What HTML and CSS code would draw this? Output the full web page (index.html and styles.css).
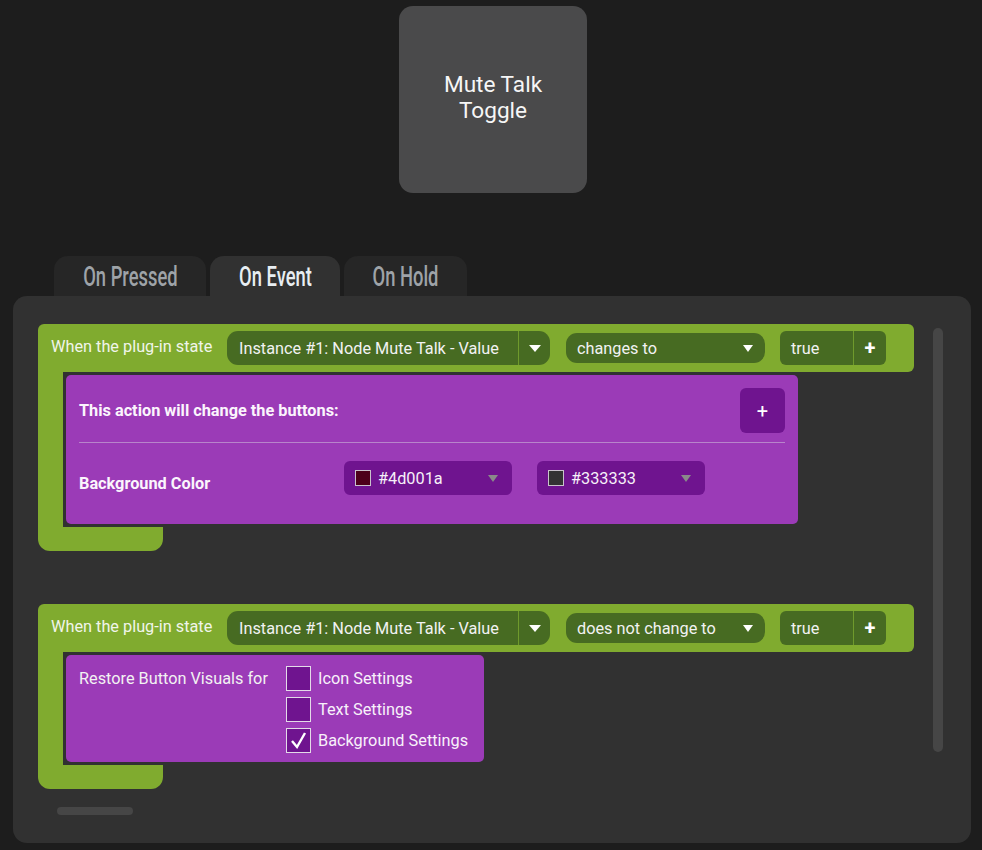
FILE: index.html
```html
<!DOCTYPE html>
<html lang="en">
<head>
    <meta charset="UTF-8">
    <meta name="viewport" content="width=device-width, initial-scale=1.0">
    <title>Mute Talk Toggle</title>
    <link rel="stylesheet" href="styles.css">
</head>
<body>
    <div class="preview">
        <div class="key">Mute Talk<br>Toggle</div>
    </div>

    <div class="tabs">
        <div class="tab tab-pressed"><span>On Pressed</span></div>
        <div class="tab tab-event active"><span>On Event</span></div>
        <div class="tab tab-hold"><span>On Hold</span></div>
    </div>

    <div class="panel">
        <div class="rules">
            <!-- rule 1 -->
            <div class="rule">
                <div class="rule-head">
                    <span class="rule-label">When the plug-in state</span>
                    <div class="select select-state">
                        <span class="select-text">Instance #1: Node Mute Talk - Value</span>
                        <span class="select-btn"><span class="tri"></span></span>
                    </div>
                    <div class="select select-cond">
                        <span class="select-text">changes to</span>
                        <span class="tri"></span>
                    </div>
                    <div class="value">
                        <span class="value-text">true</span>
                        <span class="value-add">+</span>
                    </div>
                </div>
                <div class="rule-body">
                    <div class="action action-change">
                        <div class="action-header">
                            <span class="action-title">This action will change the buttons:</span>
                            <button class="add-btn">+</button>
                        </div>
                        <div class="action-row">
                            <span class="row-label">Background Color</span>
                            <div class="pickers">
                                <div class="picker">
                                    <span class="swatch swatch-red"></span>
                                    <span class="picker-text">#4d001a</span>
                                    <span class="picker-arrow"></span>
                                </div>
                                <div class="picker">
                                    <span class="swatch swatch-grey"></span>
                                    <span class="picker-text">#333333</span>
                                    <span class="picker-arrow"></span>
                                </div>
                            </div>
                        </div>
                    </div>
                </div>
                <div class="rule-foot"></div>
            </div>

            <!-- rule 2 -->
            <div class="rule">
                <div class="rule-head">
                    <span class="rule-label">When the plug-in state</span>
                    <div class="select select-state">
                        <span class="select-text">Instance #1: Node Mute Talk - Value</span>
                        <span class="select-btn"><span class="tri"></span></span>
                    </div>
                    <div class="select select-cond">
                        <span class="select-text">does not change to</span>
                        <span class="tri"></span>
                    </div>
                    <div class="value">
                        <span class="value-text">true</span>
                        <span class="value-add">+</span>
                    </div>
                </div>
                <div class="rule-body">
                    <div class="action action-restore">
                        <span class="restore-label">Restore Button Visuals for</span>
                        <div class="checks">
                            <label class="check"><span class="box"></span>Icon Settings</label>
                            <label class="check"><span class="box"></span>Text Settings</label>
                            <label class="check"><span class="box checked"><svg width="19" height="19" viewBox="0 0 19 19"><path d="M3 10 L8 16 L16 2" fill="none" stroke="#fff" stroke-width="2.4" stroke-linejoin="miter"/></svg></span>Background Settings</label>
                        </div>
                    </div>
                </div>
                <div class="rule-foot"></div>
            </div>
        </div>
        <div class="vscroll"></div>
        <div class="hscroll"></div>
    </div>
</body>
</html>
```

FILE: styles.css
```css
body {
    margin: 0;
    padding: 0;
    background-color: #1d1d1d;
    font-family: Roboto, "Liberation Sans", sans-serif;
    font-size: 16.3px;
    color: #f2f2f2;
}

.preview {
    display: flex;
    justify-content: center;
    padding-top: 6px;
}

.key {
    width: 188px;
    height: 187px;
    margin-left: 4px;
    padding-bottom: 4px;
    box-sizing: border-box;
    background-color: #4a4a4b;
    border-radius: 14px;
    display: flex;
    align-items: center;
    justify-content: center;
    text-align: center;
    font-size: 22.6px;
    line-height: 26px;
    color: #f6f6f6;
}

.tabs {
    display: flex;
    gap: 4px;
    margin: 63px 0 0 54px;
}

.tab {
    height: 40px;
    display: flex;
    align-items: center;
    justify-content: center;
    background-color: #262626;
    border-radius: 14px 14px 0 0;
    font-family: Roboto, sans-serif;
    font-size: 27px;
    font-weight: 500;
    color: #9ea3a8;
}

.tab span {
    display: inline-block;
    transform: scaleX(0.68);
    white-space: nowrap;
    margin-top: 2px;
}

.tab-pressed { width: 152px; }
.tab-event { width: 130px; }
.tab-hold { width: 123px; }

.tab.active {
    background-color: #313131;
    color: #e8eef2;
}

.panel {
    position: relative;
    margin: 0 11px 0 13px;
    height: 547px;
    background-color: #313131;
    border-radius: 14px;
    box-sizing: border-box;
}

.rules {
    padding: 28px 0 0 25px;
    display: flex;
    flex-direction: column;
    gap: 53px;
}

.rule-head {
    width: 876px;
    height: 48px;
    box-sizing: border-box;
    padding-left: 13px;
    display: flex;
    align-items: center;
    background-color: #80ab2f;
    border-radius: 6px 6px 6px 0;
}

.rule-label {
    margin-top: -3px;
    width: 176px;
    white-space: nowrap;
    color: #f1f5ea;
}

.select {
    display: flex;
    align-items: center;
    background-color: #476b22;
    color: #f2f2f2;
    border-radius: 11px;
    box-sizing: border-box;
}

.select-state {
    width: 323px;
    height: 34px;
}

.select-state .select-text {
    flex: 1;
    padding-left: 12px;
    white-space: nowrap;
}

.select-btn {
    width: 31px;
    height: 100%;
    border-left: 1px solid #6f9a2c;
    display: flex;
    align-items: center;
    justify-content: center;
}

.tri {
    width: 0;
    height: 0;
    border-left: 6px solid transparent;
    border-right: 6px solid transparent;
    border-top: 7px solid #ffffff;
}

.select-cond {
    width: 199px;
    height: 30px;
    margin-left: 16px;
    padding: 0 12px 0 11px;
    justify-content: space-between;
}

.select-cond .tri {
    border-left-width: 5px;
    border-right-width: 5px;
    border-top-width: 7px;
}

.value {
    display: flex;
    align-items: center;
    width: 106px;
    height: 34px;
    margin-left: 15px;
    background-color: #476b22;
    border-radius: 6px;
}

.value-text {
    flex: 1;
    padding-left: 11px;
}

.value-add {
    width: 32px;
    height: 100%;
    border-left: 1px solid #6f9a2c;
    display: flex;
    align-items: center;
    justify-content: center;
    font-size: 20px;
    font-weight: bold;
    color: #fff;
}

.rule-body {
    display: flex;
    align-items: flex-start;
    border-left: 25px solid #80ab2f;
    padding: 3px 0 3px 3px;
}

.rule-foot {
    width: 125px;
    height: 24px;
    background-color: #80ab2f;
    border-radius: 0 0 12px 12px;
}

.action {
    background-color: #9b3bb7;
    border-radius: 5px;
    box-sizing: border-box;
}

.action-change {
    width: 732px;
    padding: 13px 13px 0 13px;
}

.action-header {
    display: flex;
    align-items: center;
    justify-content: space-between;
    padding-bottom: 9px;
    border-bottom: 1px solid #b884cb;
}

.action-title,
.row-label {
    font-weight: bold;
    color: #fbf5fd;
}

.add-btn {
    width: 45px;
    height: 45px;
    border: none;
    border-radius: 6px;
    background-color: #6f148f;
    color: #fff;
    font-family: Roboto, sans-serif;
    font-size: 20px;
    padding: 0;
}

.action-row {
    display: flex;
    padding: 18px 0 29px;
}

.row-label {
    width: 265px;
    padding-top: 13px;
    line-height: 20px;
}

.pickers {
    display: flex;
    gap: 25px;
}

.picker {
    width: 168px;
    height: 34px;
    box-sizing: border-box;
    padding: 0 14px 0 11px;
    display: flex;
    align-items: center;
    background-color: #6f148f;
    border-radius: 6px;
    color: #f6f0f8;
}

.swatch {
    width: 14px;
    height: 14px;
    border: 1px solid #c9c2cc;
}

.swatch-red { background-color: #4d001a; }
.swatch-grey { background-color: #333333; }

.picker-text {
    flex: 1;
    margin-left: 7px;
}

.picker-arrow {
    width: 0;
    height: 0;
    border-left: 5px solid transparent;
    border-right: 5px solid transparent;
    border-top: 7px solid #8a8a8a;
}

.action-restore {
    display: flex;
    padding: 11px 16px 9px 13px;
}

.restore-label {
    width: 207px;
    line-height: 25px;
    white-space: nowrap;
}

.checks {
    display: flex;
    flex-direction: column;
    gap: 6px;
}

.check {
    display: flex;
    align-items: center;
    gap: 7px;
    line-height: 25px;
    color: #f8f1fa;
}

.box {
    width: 23px;
    height: 23px;
    border: 1px solid #e3dbe8;
    background-color: #6f148f;
    display: flex;
    align-items: center;
    justify-content: center;
}

.vscroll {
    position: absolute;
    left: 920px;
    top: 32px;
    width: 10px;
    height: 424px;
    background-color: #464646;
    border-radius: 5px;
}

.hscroll {
    position: absolute;
    left: 44px;
    top: 511px;
    width: 76px;
    height: 8px;
    background-color: #464646;
    border-radius: 4px;
}
```
